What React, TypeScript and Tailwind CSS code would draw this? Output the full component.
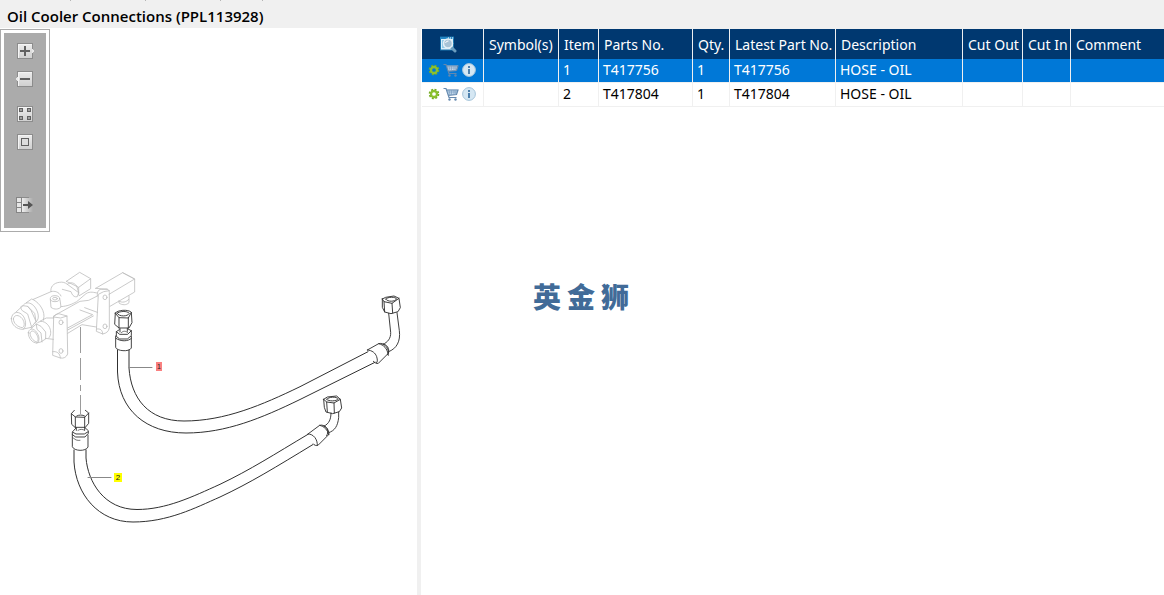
import type { ReactNode } from "react";

type Part = { item: number; partNo: string; qty: number; latest: string; description: string };

const parts: Part[] = [
  { item: 1, partNo: "T417756", qty: 1, latest: "T417756", description: "HOSE - OIL" },
  { item: 2, partNo: "T417804", qty: 1, latest: "T417804", description: "HOSE - OIL" },
];

const columns = ["Symbol(s)", "Item", "Parts No.", "Qty.", "Latest Part No.", "Description", "Cut Out", "Cut In", "Comment"];

function ToolButton({ label, className, children }: { label: string; className?: string; children: ReactNode }) {
  return (
    <button type="button" aria-label={label} className={`block size-5 ${className ?? ""}`}>
      <svg viewBox="0 0 20 20" className="size-5" shapeRendering="crispEdges">
        <defs>
          <linearGradient id="face" x1="0" y1="0" x2="0" y2="1">
            <stop offset="0" stopColor="#ededed" />
            <stop offset="1" stopColor="#cfcfcf" />
          </linearGradient>
          <linearGradient id="fade" x1="0" y1="0" x2="1" y2="0">
            <stop offset="0" stopColor="#eeeeee" />
            <stop offset="1" stopColor="#ababab" />
          </linearGradient>
        </defs>
        {children}
      </svg>
    </button>
  );
}

function Face() {
  return (
    <>
      <rect x="2.5" y="2.5" width="15" height="15" rx="1" fill="url(#face)" stroke="#8c8c8c" />
      <path d="M3.5 16.5V3.5H16.5" fill="none" stroke="#f4f4f4" />
    </>
  );
}

function Toolbar() {
  return (
    <div className="mt-px w-[50px] border border-[#ababab] bg-white p-[3px]">
      <div className="flex flex-col items-center bg-[#ababab] pt-2 pb-[13px]">
        <ToolButton label="Zoom in">
          <Face />
          <path d="M17 7l2.500 3-2.500 3z" fill="#e8e8e8" />
          <path d="M10 5v10M5 10h10" stroke="#616161" strokeWidth="2" />
        </ToolButton>
        <ToolButton label="Zoom out" className="mt-2">
          <Face />
          <path d="M3 7l-2.500 3 2.500 3z" fill="#e8e8e8" />
          <path d="M5 10h10" stroke="#616161" strokeWidth="2" />
        </ToolButton>
        <ToolButton label="Tile view" className="mt-[15px]">
          <Face />
          <path d="M4.500 4.500h3v3h-3zM12.500 4.500h3v3h-3zM4.500 12.500h3v3h-3zM12.500 12.500h3v3h-3z" fill="#a0a0a0" stroke="#626262" />
        </ToolButton>
        <ToolButton label="Fit to window" className="mt-2">
          <Face />
          <path d="M6.500 6.500h7v7h-7z" fill="#dcdcdc" stroke="#606060" />
        </ToolButton>
        <ToolButton label="Hide panel" className="mt-[43px]">
          <rect x="7" y="3" width="11" height="14" fill="url(#fade)" />
          <path d="M2 3h4v14h-4z" fill="#e6e6e6" />
          <path d="M1.500 2.500h5v15h-5zM2 7.500h4M2 12.500h4" fill="none" stroke="#858585" />
          <path d="M7 2.500h7M7 17.500h7" stroke="#8c8c8c" fill="none" />
          <path d="M8 10h7" stroke="#555" strokeWidth="2" />
          <path d="M13 6l5 4-5 4z" fill="#555" shapeRendering="auto" />
        </ToolButton>
      </div>
    </div>
  );
}

function HosesDrawing() {
  return (
    <svg viewBox="0 232 417 363" className="block w-full" fill="none" strokeLinejoin="round" strokeLinecap="round" role="img" aria-label="Oil cooler hoses">
      {/* cooler block */}
      <g transform="translate(0 260) scale(.333333)" stroke="#bdbdbd" strokeWidth="2.4">
        <path d="M199 64L239 37L272 56V86L238 107M199 64L236 82V105M236 82L272 56" />
        <path d="M287 85L368 38L404 57V96L330 139M287 85L322 88M368 38L404 57L327 103" />
        <path d="M357 123V129C366 136 380 136 387 128V108M357 123C366 130 380 126 386 118" />
        <path d="M153 95C150 82 160 69 178 67C188 65 196 68 202 73L236 98L232 110C225 112 219 108 216 102L213 95L187 88M202 73C213 64 223 69 230 78L236 98" />
        <path d="M100 118L153 95C163 92 177 95 183 108M183 140C205 138 217 132 230 125L258 101C270 93 284 98 291 99M161 168L240 124L266 121L292 108" />
        <ellipse cx="165" cy="116" rx="14" ry="9" />
        <ellipse cx="165" cy="116" rx="7" ry="4" />
        <path d="M151 118L153 142C163 150 177 148 183 141L180 119" />
        <path d="M34 176C36 157 52 152 65 163C80 176 80 203 69 208C51 208 34 196 34 176ZM40 177C42 163 56 163 67 176C75 188 74 200 67 203C53 201 41 191 40 177" />
        <path d="M48 156L69 137L83 139L104 160L108 184L94 202L70 207M69 137C60 137 61 145 67 152L83 162L95 202M83 139L93 151L108 184M71 134C79 125 91 128 100 136C113 149 119 170 112 181L105 190M79 128L95 117C112 123 132 145 132 169L130 181" />
        <path d="M85 218C87 206 97 203 107 213C119 226 120 244 111 249C97 249 84 234 85 218ZM90 219C94 209 103 212 109 222C117 234 115 244 109 246C99 242 90 231 90 219" />
        <path d="M94 205L109 192L123 199L137 216L137 237L122 246L110 249M109 192L111 208L123 219L126 246M113 188C125 178 142 188 149 203C154 215 153 228 146 234M121 183L139 174L161 174M136 235L160 238" />
        <path d="M161 171C165 163 174 159 183 163L201 168L203 282C199 292 191 296 181 294L158 286L161 171ZM161 171L182 174L201 168M158 275C169 273 181 279 181 294" />
        <ellipse cx="183" cy="187" rx="6" ry="7" /><ellipse cx="183" cy="273" rx="6" ry="7" />
        <path d="M292 108C291 94 296 88 305 88L320 87C326 88 328 92 328 98V203C326 215 320 219 308 222L289 214L295 103L311 95L328 92M290 207C302 205 308 211 308 222" />
        <ellipse cx="315" cy="112" rx="6" ry="7" /><ellipse cx="315" cy="199" rx="6" ry="7" />
        <path d="M203 204L262 172L278 164L240 150M203 210L280 168M203 220L246 194L289 201M254 143L292 157" />
      </g>
      {/* alignment axis */}
      <path d="M80.500 327V353M80.500 358V380M80.500 385V391M80.500 395V414" stroke="#9b9b9b" strokeLinecap="butt" />
      {/* hose 1 */}
      <g stroke="#303030" strokeWidth="1">
        <path d="M129 350V368C131 398 148 421 184 421C225 421 262 405 300 386.700L368 351.700" />
        <path d="M117.500 350V372C119 410 146 433 186 433C226 433 262 418 300 399.500L375 362.300" />
        <g transform="translate(60 300) scale(.333333)" strokeWidth="2.700">
          <path d="M166 39C171 30 205 27 214 37L216 68L207 84H177L164 73L166 39ZM167 41L177 53L205 54L214 37M177 53V84M205 54V84M171 40C177 33 202 32 208 40C203 50 178 51 171 40" />
          <path d="M180 86V96M202 85V94M178 89L169 95L179 103H203L214 92L204 87M169 95V109L179 117H202L214 107V92" />
          <path d="M167 108V142C169 153 208 157 214 144V109M168 115C181 125 205 125 214 115" />
          <path d="M184 98C190 92 197 92 203 98" strokeWidth="2" />
        </g>
        <g transform="translate(300 285) scale(.333333)" strokeWidth="2.800">
          <path d="M247 42L257 37L282 33L297 40L301 68L294 80L273 86L254 81L247 67V42ZM247 42L252 50L276 55L297 40M252 50L254 81M276 55L278 84" />
          <path d="M257 42C263 35 287 35 290 42C285 50 263 52 257 42" />
          <path d="M266 85L272 142C273 160 263 172 249 178M291 83L298 137C302 169 290 191 266 200M202 195L236 176C249 172 265 185 266 204L235 235C230 237 223 232 220 229M202 195C217 196 226 204 230 215C233 225 233 232 229 234M236 176C252 180 262 190 265 211M250 177C266 180 270 197 263 209" />
        </g>
      </g>
      {/* hose 2 */}
      <g stroke="#303030" strokeWidth="1">
        <path d="M86 450V458C88 482 104 509.500 137 509.500C166 509.500 192 497 220 484.300C250 470 275 454 308 434.300" />
        <path d="M74 450V462C76 494 98 522 133 522C168 522 195 508 220 497C250 483 276 467 313 444.500" />
        <g transform="translate(60 400) scale(.333333)" strokeWidth="2.700">
          <path d="M43 31L34 41L35 73L45 82H76L86 70V39L76 31M34 41L46 51L74 52L86 39M46 51V82M74 52V82M50 48C56 44 68 44 74 48" />
          <path d="M49 83V91M74 83V90M47 85L37 96V104L47 111H75L85 100V92L76 84M39 97L48 102H73L83 96M37 103V140C42 154 78 155 84 141V105" />
          <path d="M39 113C44 120 52 122 60 121M54 91C60 87 68 87 74 91" strokeWidth="2" />
        </g>
        <g transform="translate(300 285) scale(.333333)" strokeWidth="2.800">
          <path d="M71 343L82 336L110 333L121 343L125 369L118 380L98 386L78 381L73 367L71 343ZM71 343L80 351L102 354L121 343M80 351L82 381M102 354L103 384" />
          <path d="M80 343C86 335 109 334 115 342C109 349 86 350 80 343" />
          <path d="M93 384C93 403 87 416 73 423M116 381V398C113 423 105 437 86 443M24 447L59 421C74 417 87 432 87 448L55 480C49 484 42 480 40 477M24 447C40 446 53 463 52 481M59 421C73 424 83 435 86 449M71 423C85 427 86 442 80 452" />
        </g>
      </g>
      {/* call-outs */}
      <path d="M129 367.500H152M88 477.500H111" stroke="#888" />
      <rect x="156" y="362" width="6" height="9" fill="#fa8080" />
      <rect x="114" y="473" width="8" height="9" fill="#ffff00" />
      <text x="159" y="369" textAnchor="middle" fill="#222" className="font-['Liberation_Sans'] text-[7px]">1</text>
      <text x="118" y="480" textAnchor="middle" fill="#222" className="font-['Liberation_Sans'] text-[8px]">2</text>
    </svg>
  );
}

function SearchIcon() {
  return (
    <svg viewBox="0 0 18 18" className="size-[18px]">
      <rect x="1.500" y="2" width="13" height="13" fill="#d9effb" stroke="#1b75ad" />
      <path d="M1 3h14" stroke="#2386c4" strokeWidth="2" />
      <path d="M9 3h1M11 3h1M13 3h1" stroke="#fff" />
      <path d="M3 6h2M3 8h2M3 10h2M3 12h3" stroke="#49a3d2" />
      <path d="M12 12l4 4" stroke="#6a9dbf" strokeWidth="3" strokeLinecap="round" />
      <circle cx="9" cy="8.500" r="4.500" fill="#a7c3d6" stroke="#e4f0f6" strokeWidth="1.500" />
      <path d="M6.500 8a3 3 0 0 1 3-2" fill="none" stroke="#fff" />
    </svg>
  );
}

function GearIcon() {
  return (
    <svg viewBox="0 0 12 12" className="size-3">
      <circle cx="6" cy="6" r="4.300" fill="none" stroke="#76ad25" strokeWidth="2" strokeDasharray="1.900 1.477" />
      <circle cx="6" cy="6" r="3" fill="none" stroke="#8bc02f" strokeWidth="2.300" />
    </svg>
  );
}

function CartIcon() {
  return (
    <svg viewBox="0 0 16 14" className="h-3.5 w-4" fill="none">
      <path d="M3.500 2.500H15L13.500 7.500L5 8Z" fill="#c2d8eb" />
      <path d="M.5 1.500H3L6 10.500H13.500M3.500 3H15L13.500 7.500L5 8.300" stroke="#6488ae" strokeWidth="1.200" />
      <path d="M4 5h10.500M6 3l1 5M8.500 3v5M11 3v5M13 3l-.500 5" stroke="#7d9fc2" strokeWidth=".7" />
      <circle cx="6.500" cy="12.500" r="1.200" fill="#6488ae" />
      <circle cx="12.500" cy="12.500" r="1.200" fill="#6488ae" />
    </svg>
  );
}

function InfoIcon() {
  return (
    <svg viewBox="0 0 14 14" className="size-3.5">
      <circle cx="7" cy="7" r="6.400" fill="#d5e7f3" stroke="#a5c4da" />
      <path d="M7 3v2M7 6v5" stroke="#4d80ad" strokeWidth="2" />
    </svg>
  );
}

function PartsTable() {
  return (
    <table className="w-full table-fixed border-separate border-spacing-0 text-left font-normal">
      <colgroup>
        <col className="w-[62px]" />
        <col className="w-[75px]" />
        <col className="w-10" />
        <col className="w-[94px]" />
        <col className="w-[37px]" />
        <col className="w-[106px]" />
        <col className="w-[127px]" />
        <col className="w-[60px]" />
        <col className="w-12" />
        <col />
      </colgroup>
      <thead>
        <tr className="h-[30px] bg-[#003870] text-white">
          <th scope="col" className="border-r border-[#f0f0f0] p-0 pr-2.5">
            <button type="button" aria-label="Search parts" className="mx-auto block">
              <SearchIcon />
            </button>
          </th>
          {columns.map((name) => (
            <th key={name} scope="col" className="border-r border-[#f0f0f0] p-0 pl-[5px] font-normal whitespace-nowrap last:border-r-0">
              {name}
            </th>
          ))}
        </tr>
      </thead>
      <tbody>
        {parts.map((part, index) => {
          const cells = ["", part.item, part.partNo, part.qty, part.latest, part.description, "", "", ""];
          return (
            <tr key={part.partNo} className={`h-6 ${index === 0 ? "bg-[#0078d7] text-white" : "bg-white text-black"}`}>
              <td className="border-r border-b border-[#f0f0f0] p-0 pb-0.5 pl-1.5">
                <div className="flex items-center gap-[3px]">
                  <button type="button" aria-label="Options"><GearIcon /></button>
                  <button type="button" aria-label="Add to cart"><CartIcon /></button>
                  <button type="button" aria-label="Information"><InfoIcon /></button>
                </div>
              </td>
              {cells.map((value, i) => (
                <td key={columns[i]} className="border-r border-b border-[#f0f0f0] p-0 pb-0.5 pl-1 leading-5 whitespace-nowrap last:border-r-0">
                  {value}
                </td>
              ))}
            </tr>
          );
        })}
      </tbody>
    </table>
  );
}

export default function App() {
  return (
    <div className="flex min-h-screen flex-col bg-white font-['Noto_Sans','Noto_Sans_CJK_SC',sans-serif] text-[14px] text-black">
      <header className="bg-[#f0f0f0]">
        <div className="flex h-px" aria-hidden="true">
          <span className="w-[71px] border-r border-[#b5b5b5]" />
          <span className="w-[75px] border-r border-[#b5b5b5]" />
          <span className="w-[75px] border-r border-[#b5b5b5]" />
          <span className="w-[42px] border-r border-[#b5b5b5]" />
        </div>
        <h1 className="px-[7px] pt-[5px] pb-0.5 font-['Open_Sans','Noto_Sans',sans-serif] text-[15px] leading-5 font-semibold">Oil Cooler Connections (PPL113928)</h1>
      </header>
      <main className="flex grow">
        <section className="w-[421px] shrink-0 border-r-4 border-[#f0f0f0]">
          <Toolbar />
          <HosesDrawing />
        </section>
        <section className="min-w-0 grow border-t border-[#f0f0f0] pl-px">
          <PartsTable />
          <div className="mt-[176px] ml-[111px] flex gap-1.5 text-[28px] leading-7 font-black text-[#416b98]">
            <span>英</span>
            <span>金</span>
            <span>狮</span>
          </div>
        </section>
      </main>
    </div>
  );
}
